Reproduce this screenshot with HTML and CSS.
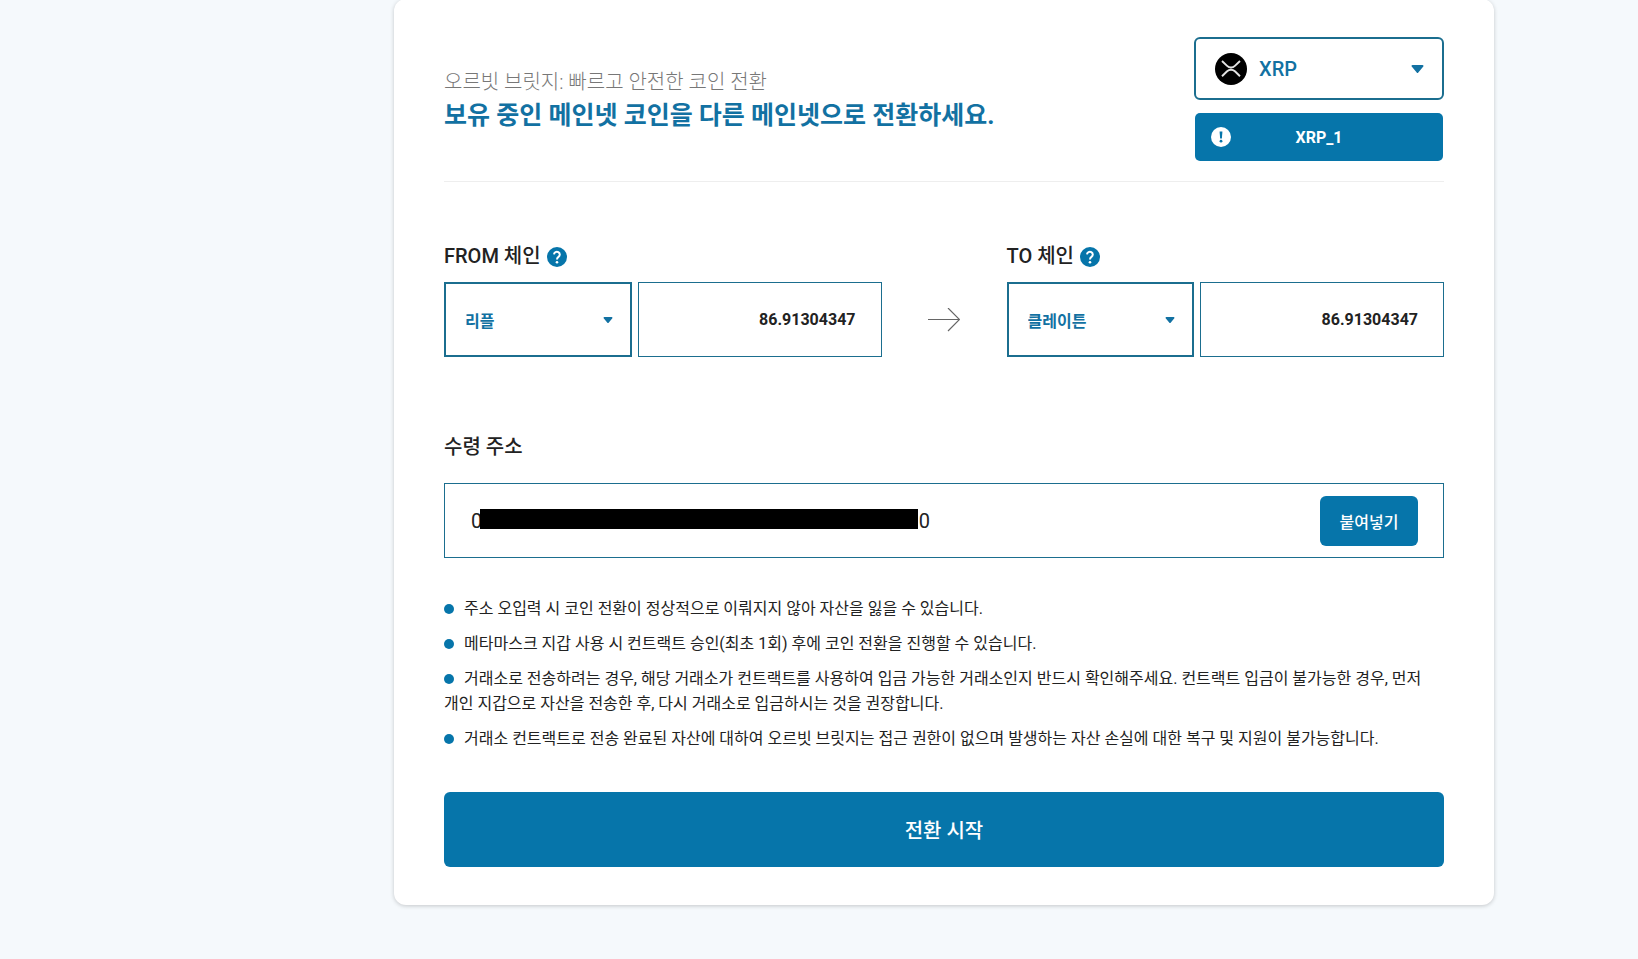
FILE: index.html
```html
<!DOCTYPE html>
<html lang="ko">
<head>
<meta charset="utf-8">
<meta name="viewport" content="width=device-width, initial-scale=1">
<title>오르빗 브릿지</title>
<link rel="stylesheet" href="styles.css">
</head>
<body>
<main class="page">
  <form class="card">
    <header class="head">
      <div class="head-text">
        <p class="subtitle">오르빗 브릿지: 빠르고 안전한 코인 전환</p>
        <h1 class="title">보유 중인 메인넷 코인을 다른 메인넷으로 전환하세요.</h1>
      </div>
      <div class="token">
        <div class="token-picker">
          <svg class="token-logo" viewBox="0 0 32 32" aria-hidden="true">
            <circle cx="16" cy="16" r="16" fill="#000"/>
            <path d="M7 8l5.100 4.900a5.600 5.600 0 0 0 7.800 0L25 8M7 23.200l5.100-4.900a5.600 5.600 0 0 1 7.800 0l5.100 4.900" fill="none" stroke="#e4e4e4" stroke-width="1.900"/>
          </svg>
          <select class="token-select" aria-label="코인">
            <option>XRP</option>
          </select>
          <svg class="caret caret-large" viewBox="0 0 12 8" aria-hidden="true"><path d="M1 0h10a1 1 0 0 1 .8 1.600L6.800 7.600a1 1 0 0 1-1.600 0L.2 1.600A1 1 0 0 1 1 0z"/></svg>
        </div>
        <button class="token-tag" type="button">
          <svg class="token-info" viewBox="0 0 20 20" aria-hidden="true">
            <circle cx="10" cy="10" r="10" fill="#fff"/>
            <path d="M8.600 4.500h2.800l-.5 7H9.100z" fill="#0675aa"/>
            <circle cx="10" cy="14.200" r="1.400" fill="#0675aa"/>
          </svg>
          <span>XRP_1</span>
        </button>
      </div>
    </header>

    <section class="chains">
      <div class="chain">
        <div class="label-row">
          <label for="from-chain">FROM 체인</label>
          <button class="help" type="button" aria-label="도움말">
            <svg viewBox="0 0 20 20" aria-hidden="true"><circle cx="10" cy="10" r="10" fill="#0675aa"/><path d="M7 7.400a2.900 2.800 0 1 1 4.500 2.500C10.400 10.700 10 11 10 12.400" fill="none" stroke="#fff" stroke-width="2"/><circle cx="10" cy="15.200" r="1.300" fill="#fff"/></svg>
          </button>
        </div>
        <div class="fields">
          <div class="chain-picker">
            <select class="chain-select" id="from-chain"><option>리플</option></select>
            <svg class="caret caret-small" viewBox="0 0 12 8" aria-hidden="true"><path d="M1 0h10a1 1 0 0 1 .8 1.600L6.800 7.600a1 1 0 0 1-1.600 0L.2 1.600A1 1 0 0 1 1 0z"/></svg>
          </div>
          <input class="amount" type="text" value="86.91304347" aria-label="FROM 수량">
        </div>
      </div>
      <div class="arrow">
        <svg viewBox="0 0 32 24" aria-hidden="true"><path d="M0 11.500h31.500M20 0L31.500 11.500 20 23" fill="none" stroke="#666" stroke-width="1.200"/></svg>
      </div>
      <div class="chain">
        <div class="label-row">
          <label for="to-chain">TO 체인</label>
          <button class="help" type="button" aria-label="도움말">
            <svg viewBox="0 0 20 20" aria-hidden="true"><circle cx="10" cy="10" r="10" fill="#0675aa"/><path d="M7 7.400a2.900 2.800 0 1 1 4.500 2.500C10.400 10.700 10 11 10 12.400" fill="none" stroke="#fff" stroke-width="2"/><circle cx="10" cy="15.200" r="1.300" fill="#fff"/></svg>
          </button>
        </div>
        <div class="fields">
          <div class="chain-picker">
            <select class="chain-select" id="to-chain"><option>클레이튼</option></select>
            <svg class="caret caret-small" viewBox="0 0 12 8" aria-hidden="true"><path d="M1 0h10a1 1 0 0 1 .8 1.600L6.800 7.600a1 1 0 0 1-1.600 0L.2 1.600A1 1 0 0 1 1 0z"/></svg>
          </div>
          <input class="amount" type="text" value="86.91304347" aria-label="TO 수량">
        </div>
      </div>
    </section>

    <section class="receive">
      <label class="receive-label" for="address">수령 주소</label>
      <div class="address">
        <input class="address-input" id="address" type="text" value="0                                                                                        0">
        <span class="address-mask" aria-hidden="true"></span>
        <button class="paste" type="button">붙여넣기</button>
      </div>
    </section>

    <ul class="notes">
      <li>주소 오입력 시 코인 전환이 정상적으로 이뤄지지 않아 자산을 잃을 수 있습니다.</li>
      <li>메타마스크 지갑 사용 시 컨트랙트 승인(최초 1회) 후에 코인 전환을 진행할 수 있습니다.</li>
      <li>거래소로 전송하려는 경우, 해당 거래소가 컨트랙트를 사용하여 입금 가능한 거래소인지 반드시 확인해주세요. 컨트랙트 입금이 불가능한 경우, 먼저 개인 지갑으로 자산을 전송한 후, 다시 거래소로 입금하시는 것을 권장합니다.</li>
      <li>거래소 컨트랙트로 전송 완료된 자산에 대하여 오르빗 브릿지는 접근 권한이 없으며 발생하는 자산 손실에 대한 복구 및 지원이 불가능합니다.</li>
    </ul>

    <button class="submit" type="button">전환 시작</button>
  </form>
</main>
</body>
</html>
```
FILE: styles.css
```css
:root {
  --blue: #0675aa;
  --line: #1b6e8f;
  --accent: #1271a2;
  --ink: #222;
}

* {
  box-sizing: border-box;
}

body {
  margin: 0;
  background: #f5f9fc;
  color: var(--ink);
  font-family: Roboto, "Noto Sans CJK KR", sans-serif;
  font-size: 16px;
  word-break: keep-all;
}

button,
input,
select {
  margin: 0;
  padding: 0;
  border: 0;
  background: none;
  color: inherit;
  font: inherit;
}

svg {
  display: block;
}

.page {
  padding: 0 20px 54px 270px;
}

.card {
  max-width: 1100px;
  margin: -1px auto 0;
  padding: 38px 50px;
  border-radius: 12px;
  background: #fff;
  box-shadow: 0 1px 4px rgba(0, 0, 0, 0.2);
}

.head {
  display: flex;
  align-items: center;
  justify-content: space-between;
  gap: 24px;
  padding-bottom: 20px;
  border-bottom: 1px solid #eee;
}

.head-text {
  padding-top: 4px;
}

.subtitle {
  margin: 0;
  color: #777;
  font-size: 20px;
  font-weight: 300;
  line-height: 30px;
}

.title {
  margin: 0;
  color: var(--accent);
  font-size: 25px;
  font-weight: 700;
  line-height: 38px;
}

.token {
  display: flex;
  flex: none;
  flex-direction: column;
  gap: 13px;
  width: 250px;
}

.token-picker,
.chain-picker {
  position: relative;
}

.token-select {
  display: block;
  width: 100%;
  height: 63px;
  padding: 0 48px 0 63px;
  border: 2px solid var(--line);
  border-radius: 6px;
  appearance: none;
  color: var(--accent);
  font-size: 20px;
  font-weight: 500;
}

.token-logo {
  position: absolute;
  top: 16px;
  left: 21px;
  width: 32px;
  height: 32px;
}

.caret {
  position: absolute;
  top: 50%;
  fill: var(--accent);
  pointer-events: none;
}

.caret-large {
  right: 20px;
  width: 13px;
  height: 8px;
  margin-top: -4px;
}

.caret-small {
  right: 19px;
  width: 10px;
  height: 6px;
  margin-top: -3px;
}

.token-tag {
  position: relative;
  height: 48px;
  margin: 0 1px;
  border-radius: 5px;
  background: var(--blue);
  color: #fff;
  font-weight: 700;
}

.token-info {
  position: absolute;
  top: 14px;
  left: 16px;
  width: 20px;
  height: 20px;
}

.chains {
  display: grid;
  grid-template-columns: 1fr 125px 1fr;
  align-items: end;
  margin-top: 60px;
}

.label-row {
  display: flex;
  align-items: center;
  gap: 6px;
  height: 30px;
  margin-bottom: 10px;
  font-size: 20px;
  font-weight: 500;
  line-height: 28px;
}

.label-row label {
  padding-bottom: 2px;
}

.help {
  flex: none;
  width: 20px;
  height: 20px;
}

.fields {
  display: grid;
  grid-template-columns: 10fr 13fr;
  gap: 6px;
}

.chain-select {
  display: block;
  width: 100%;
  height: 75px;
  padding: 4px 36px 0 19px;
  border: 2px solid var(--line);
  border-radius: 0;
  appearance: none;
  color: var(--accent);
  font-weight: 700;
}

.amount {
  width: 100%;
  min-width: 0;
  height: 75px;
  padding: 0 25px;
  border: 1px solid var(--line);
  font-weight: 700;
  text-align: right;
}

.arrow {
  display: flex;
  align-items: center;
  justify-content: center;
  height: 75px;
}

.arrow svg {
  width: 32px;
  height: 24px;
}

.receive {
  margin-top: 75px;
}

.receive-label {
  display: block;
  font-size: 20px;
  font-weight: 500;
  line-height: 30px;
}

.address {
  position: relative;
  display: flex;
  align-items: center;
  height: 75px;
  margin-top: 21px;
  padding: 0 25px 0 26px;
  border: 1px solid var(--line);
}

.address-input {
  flex: 1;
  min-width: 0;
  height: 50px;
  font-size: 20px;
  font-weight: 400;
}

.address-mask {
  position: absolute;
  top: 25px;
  left: 35px;
  width: 438px;
  height: 20px;
  background: #000;
}

.paste {
  flex: none;
  width: 98px;
  height: 50px;
  border-radius: 6px;
  background: var(--blue);
  color: #fff;
  font-weight: 500;
}

.notes {
  display: flex;
  flex-direction: column;
  gap: 10px;
  margin: 38px 0 0;
  padding: 0;
  list-style: none;
  line-height: 25px;
}

.notes li::before {
  display: inline-block;
  width: 10px;
  height: 10px;
  margin-right: 10px;
  border-radius: 50%;
  background: var(--blue);
  content: "";
}

.submit {
  display: block;
  width: 100%;
  height: 75px;
  margin-top: 41px;
  border-radius: 6px;
  background: var(--blue);
  color: #fff;
  font-size: 20px;
  font-weight: 500;
}
```
